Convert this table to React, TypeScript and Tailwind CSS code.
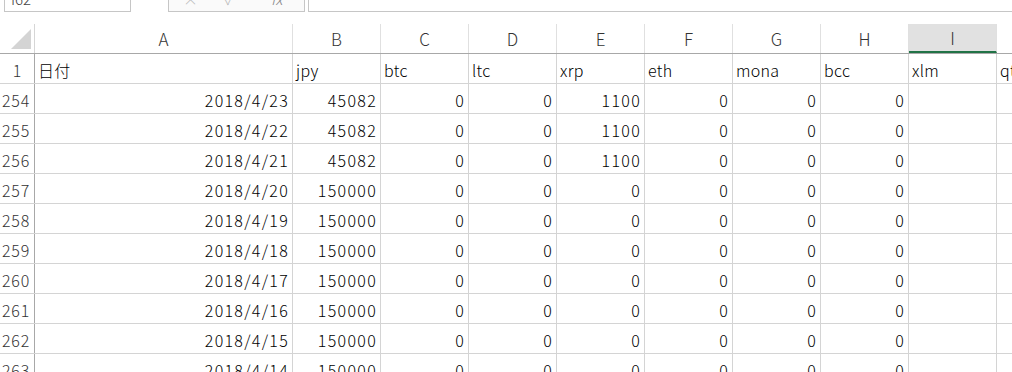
import React from "react";

const cols = ["A", "B", "C", "D", "E", "F", "G", "H", "I", "J"];
const widths = ["w-[258px]", "w-[88px]", "w-[88px]", "w-[88px]", "w-[88px]", "w-[88px]", "w-[88px]", "w-[88px]", "w-[88px]", "w-[88px]"];
const heads = ["日付", "jpy", "btc", "ltc", "xrp", "eth", "mona", "bcc", "xlm", "qty"];

const rows: { n: number; vals: string[] }[] = [];
for (let i = 0; i < 10; i++) {
  const d = 23 - i;
  const early = i < 3;
  rows.push({
    n: 254 + i,
    vals: [
      `2018/4/${d}`,
      early ? "45082" : "150000",
      "0",
      "0",
      early ? "1100" : "0",
      "0",
      "0",
      "0",
      "",
      "",
    ],
  });
}

const font = { fontFamily: '"Noto Sans CJK JP", "Noto Sans", sans-serif' };

export default function App() {
  return (
    <div className="w-[1012px] h-[372px] overflow-hidden bg-white text-[16px] text-black font-light" style={font}>
      {/* formula bar */}
      <div className="h-[24px] flex items-start">
        <div className="ml-[4px] w-[127px] h-[12px] border-x border-b border-[#c6c6c6] relative overflow-hidden">
          <span className="absolute left-[6px] top-[-12px] text-[15px] text-[#444]">I62</span>
        </div>
        <div className="ml-[37px] w-[137px] h-[12px] border-x border-b border-[#c6c6c6] bg-[#fafafa] relative overflow-hidden">
          <span className="absolute left-[14px] top-[-12px] text-[15px] text-[#bbb]">×</span>
          <span className="absolute left-[56px] top-[-12px] text-[15px] text-[#bbb]">✓</span>
          <span className="absolute left-[102px] top-[-12px] text-[15px] italic text-[#888]">fx</span>
        </div>
        <div className="ml-[3px] flex-1 h-[12px] border-l border-b border-[#c6c6c6]" />
      </div>

      {/* column header row */}
      <div className="flex h-[30px] border-b border-[#a8a8a8]">
        <div className="w-[35px] shrink-0 border-r border-[#d6d6d6] relative">
          <div
            className="absolute right-[3px] bottom-[4px] w-[20px] h-[20px] bg-[#d4d4d4]"
            style={{ clipPath: "polygon(100% 0, 100% 100%, 0 100%)" }}
          />
        </div>
        {cols.map((c, i) => {
          const sel = c === "I";
          return (
            <div
              key={c}
              className={`${widths[i]} shrink-0 flex items-center justify-center border-r border-[#e0e0e0] text-[17px] text-[#333] ${
                sel ? "bg-[#e1e1e1] border-b-2 border-b-[#217346]" : ""
              }`}
            >
              {c}
            </div>
          );
        })}
      </div>

      {/* row 1 */}
      <div className="flex h-[30px] border-b border-[#d4d4d4]">
        <div className="w-[35px] shrink-0 border-r border-[#a8a8a8] flex items-center justify-center text-[#333] pt-[2px]">
          1
        </div>
        {heads.map((h, i) => (
          <div
            key={i}
            className={`${widths[i]} shrink-0 border-r border-[#d4d4d4] flex items-center pl-[3px] pt-[2px] whitespace-nowrap tracking-[0.3px]`}
          >
            {h}
          </div>
        ))}
      </div>

      {rows.map((r) => (
        <div key={r.n} className="flex h-[30px] border-b border-[#d4d4d4]">
          <div className="w-[35px] shrink-0 border-r border-[#a8a8a8] flex items-center justify-start pl-[2px] text-[#333] pt-[2px] tracking-[0.8px]">
            {r.n}
          </div>
          {r.vals.map((v, i) => (
            <div
              key={i}
              className={`${widths[i]} shrink-0 border-r border-[#d4d4d4] flex items-center justify-end pr-[3px] pt-[2px] whitespace-nowrap tracking-[1.3px]`}
            >
              {v}
            </div>
          ))}
        </div>
      ))}
    </div>
  );
}
